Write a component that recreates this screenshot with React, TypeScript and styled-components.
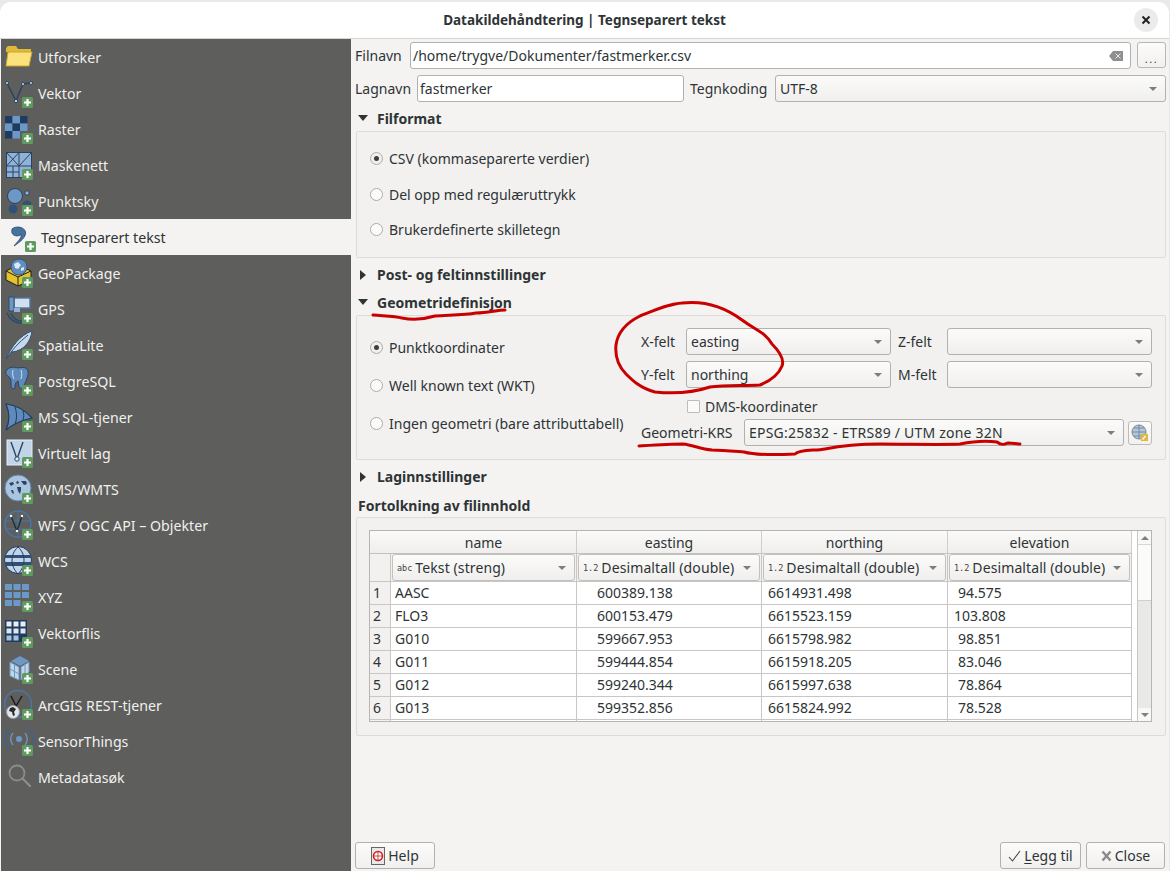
import React from "react";
import styled, { createGlobalStyle } from "styled-components";

const Global = createGlobalStyle`
  html, body { margin: 0; padding: 0; height: 100%; background: #e9e9e9; }
  body { font-family: "Noto Sans", "DejaVu Sans", sans-serif; font-size: 14px; color: #2e3436; overflow: hidden; }
  #root { height: 871px; }
`;

const Page = styled.div`
  position: relative;
  width: 1170px;
  height: 871px;
  padding-top: 2px;
  box-sizing: border-box;
  overflow: hidden;
`;
const Win = styled.div`
  width: 1169px;
  height: 869px;
  background: #f4f3f1;
  border-radius: 11px 11px 0 0;
  display: flex;
  flex-direction: column;
  overflow: hidden;
`;
const TitleBar = styled.div`
  height: 36px;
  flex: none;
  background: #ffffff;
  border-bottom: 1px solid #d6d5d3;
  display: flex;
  align-items: center;
  justify-content: center;
  position: relative;
  font-weight: 700;
  font-size: 13.5px;
  color: #2e3436;
`;
const CloseRound = styled.div`
  position: absolute;
  right: 11px;
  top: 6px;
  width: 24px;
  height: 24px;
  border-radius: 50%;
  background: #ebebeb;
  display: flex;
  align-items: center;
  justify-content: center;
`;
const Body = styled.div`
  flex: 1;
  display: flex;
  min-height: 0;
`;
const Sidebar = styled.div`
  width: 350px;
  margin-left: 1px;
  flex: none;
  background: #5e5e5c;
  font-size: 14.2px;
`;
const SideRow = styled.div<{ $active?: boolean }>`
  height: 36px;
  display: flex;
  align-items: center;
  box-sizing: border-box;
  padding-left: ${(p) => (p.$active ? 5 : 2)}px;
  gap: 3px;
  background: ${(p) => (p.$active ? "#f4f3f1" : "transparent")};
  color: ${(p) => (p.$active ? "#2e3436" : "#f0f0ee")};
`;
const SideIconBox = styled.svg`
  width: 32px;
  height: 32px;
  flex: none;
`;
const Main = styled.div`
  flex: 1;
  min-width: 0;
  padding: 3px 3px 2px 4px;
  display: flex;
  flex-direction: column;
`;
const FormRow = styled.div`
  display: flex;
  align-items: center;
  height: 27px;
  margin-bottom: 6px;
`;
const Label = styled.span<{ $w?: number; $ml?: number }>`
  flex: none;
  white-space: nowrap;
  ${(p) => (p.$w ? `width: ${p.$w}px;` : "")}
  margin-left: ${(p) => p.$ml ?? 0}px;
`;
const Input = styled.div<{ $w: number }>`
  flex: none;
  width: ${(p) => p.$w}px;
  height: 27px;
  box-sizing: border-box;
  background: #fff;
  border: 1px solid #b2b1af;
  border-radius: 3px;
  padding: 0 7px 0 2px;
  display: flex;
  align-items: center;
  justify-content: space-between;
  white-space: nowrap;
`;
const Combo = styled.div<{ $w?: number; $table?: boolean; $wide?: boolean }>`
  flex: ${(p) => (p.$table ? "1" : "none")};
  width: ${(p) => (p.$w ? `${p.$w}px` : "auto")};
  height: 27px;
  box-sizing: border-box;
  background: linear-gradient(#fbfbfa, #f0efed);
  border: 1px solid ${(p) => (p.$table ? "#c2c1bf" : "#b2b1af")};
  border-radius: 3px;
  padding: 0 8px 0 4px;
  display: flex;
  align-items: center;
  justify-content: space-between;
  white-space: nowrap;
  letter-spacing: ${(p) => (p.$wide ? "0.22px" : "0")};
`;
const Caret = styled.span`
  flex: none;
  width: 0;
  height: 0;
  border-left: 4px solid transparent;
  border-right: 4px solid transparent;
  border-top: 4px solid #7d7d7b;
`;
const SmallBtn = styled.div`
  flex: none;
  width: 29px;
  height: 26px;
  margin-left: 6px;
  margin-top: -1px;
  box-sizing: border-box;
  border: 1px solid #b8b7b5;
  border-radius: 3px;
  background: linear-gradient(#fbfbfa, #f2f1ef);
  display: flex;
  align-items: flex-end;
  justify-content: center;
  font-size: 11px;
  line-height: 17px;
  color: #444;
  letter-spacing: 1.5px;
`;
const SectionHead = styled.div<{ $h?: number; $open?: boolean; $top?: number; $left?: number; $pt?: number }>`
  height: ${(p) => p.$h ?? 26}px;
  margin-top: ${(p) => p.$top ?? 0}px;
  padding-top: ${(p) => p.$pt ?? 0}px;
  flex: none;
  box-sizing: border-box;
  display: flex;
  align-items: center;
  font-weight: 700;
  padding-left: ${(p) => p.$left ?? (p.$open ? 0 : 2)}px;
  gap: ${(p) => (p.$open ? 9 : 11)}px;
`;
const TriDown = styled.span`
  width: 0;
  height: 0;
  margin-left: 3px;
  border-left: 5.5px solid transparent;
  border-right: 5.5px solid transparent;
  border-top: 6px solid #2e3436;
`;
const TriRight = styled.span`
  width: 0;
  height: 0;
  margin-left: 3px;
  border-top: 5.5px solid transparent;
  border-bottom: 5.5px solid transparent;
  border-left: 6px solid #2e3436;
`;
const Group = styled.div<{ $mb?: number }>`
  box-sizing: border-box;
  width: 810px;
  margin-left: 1px;
  flex: none;
  border: 1px solid #dddcda;
  border-radius: 2px;
  background: #f2f1ef;
  margin-bottom: ${(p) => p.$mb ?? 0}px;
`;
const RadioList = styled.div`
  height: 125px;
  box-sizing: border-box;
  padding: 9px 13px 0;
`;
const RadioRow = styled.div<{ $h: number }>`
  height: ${(p) => p.$h}px;
  display: flex;
  align-items: center;
  gap: 6px;
  white-space: nowrap;
`;
const Radio = styled.span<{ $on?: boolean }>`
  width: 13px;
  height: 13px;
  flex: none;
  box-sizing: border-box;
  border: 1px solid #ababa9;
  border-radius: 50%;
  background: ${(p) => (p.$on ? "#f0efed" : "#fbfbfa")};
  display: flex;
  align-items: center;
  justify-content: center;
  &::after {
    content: "";
    display: ${(p) => (p.$on ? "block" : "none")};
    width: 5px;
    height: 5px;
    border-radius: 50%;
    background: #3a3f41;
  }
`;
const GeoBody = styled.div`
  height: 143px;
  box-sizing: border-box;
  padding: 12px 13px 0 13px;
  display: flex;
  justify-content: space-between;
`;
const GeoLeft = styled.div`
  flex: none;
`;
const GeoRight = styled.div`
  width: 511px;
  flex: none;
`;
const FieldGrid = styled.div`
  display: grid;
  grid-template-columns: 45px 205px 56px 205px;
  grid-auto-rows: 27px;
  row-gap: 6px;
  align-items: center;
`;
const FieldLabel = styled.span<{ $pad?: number }>`
  padding-left: ${(p) => p.$pad ?? 0}px;
  white-space: nowrap;
`;
const DmsRow = styled.div`
  height: 31px;
  display: flex;
  align-items: center;
  padding-left: 46px;
  gap: 5px;
  padding-top: 6px;
  box-sizing: border-box;
`;
const Check = styled.span`
  width: 13px;
  height: 13px;
  box-sizing: border-box;
  border: 1px solid #bdbcba;
  background: #fafaf9;
  border-radius: 1px;
`;
const KrsRow = styled.div`
  height: 27px;
  display: flex;
  align-items: center;
`;
const IconBtn = styled.div`
  width: 24px;
  height: 24px;
  margin-left: 4px;
  box-sizing: border-box;
  border: 1px solid #bcbbb9;
  border-radius: 3px;
  background: linear-gradient(#fbfbfa, #f2f1ef);
  display: flex;
  align-items: center;
  justify-content: center;
`;
const TableGroupBody = styled.div`
  padding: 12px 13px 13px 12px;
`;
const TableFrame = styled.div`
  height: 192px;
  box-sizing: border-box;
  border: 1px solid #b6b5b3;
  display: flex;
  background: #fff;
  overflow: hidden;
`;
const TableView = styled.div`
  width: 762px;
  flex: none;
  display: grid;
  grid-template-columns: 21px 186px 185px 186px 184px;
  grid-template-rows: 23px 28px repeat(7, 23px);
  align-content: start;
  height: 190px;
  overflow: hidden;
`;
const HeadCell = styled.div<{ $span?: boolean }>`
  ${(p) => (p.$span ? "grid-column: span 2; padding-left: 21px;" : "")}
  box-sizing: border-box;
  background: linear-gradient(#fafaf9, #efeeec);
  border-bottom: 1px solid #c2c1bf;
  border-right: 1px solid #cfcecc;
  display: flex;
  align-items: center;
  justify-content: center;
`;
const CornerCell = styled.div`
  background: #f2f1ef;
  border-right: 1px solid #c8c7c5;
  border-bottom: 1px solid #c8c7c5;
`;
const TypeCell = styled.div`
  background: #f2f1ef;
  border-right: 1px solid #c8c7c5;
  border-bottom: 1px solid #c8c7c5;
  padding: 0 1px;
  display: flex;
  align-items: center;
`;
const TypeTag = styled.span`
  font-family: "DejaVu Sans Mono", monospace;
  font-size: 8.5px;
  margin-right: 3px;
  color: #444;
  letter-spacing: 0;
`;
const TypeText = styled.span`
  display: flex;
  align-items: center;
  letter-spacing: 0.1px;
`;
const RowHead = styled.div`
  background: #f2f1ef;
  border-right: 1px solid #c8c7c5;
  border-bottom: 1px solid #c8c7c5;
  padding-left: 3px;
  line-height: 22px;
`;
const Cell = styled.div<{ $indent: number }>`
  box-sizing: border-box;
  border-right: 1px solid #c8c7c5;
  border-bottom: 1px solid #c8c7c5;
  padding-left: ${(p) => p.$indent}px;
  line-height: 22px;
  white-space: nowrap;
`;
const Scroll = styled.div`
  width: 14px;
  margin-left: 5px;
  flex: none;
  border-left: 1px solid #c8c7c5;
  display: flex;
  flex-direction: column;
`;
const ScrollArrow = styled.div`
  height: 13px;
  flex: none;
  background: #f8f8f7;
  display: flex;
  align-items: center;
  justify-content: center;
`;
const ArrowUp = styled.span`
  width: 0;
  height: 0;
  border-left: 4px solid transparent;
  border-right: 4px solid transparent;
  border-bottom: 4px solid #808080;
`;
const ArrowDown = styled.span`
  width: 0;
  height: 0;
  border-left: 4px solid transparent;
  border-right: 4px solid transparent;
  border-top: 4px solid #808080;
`;
const ScrollThumb = styled.div`
  height: 55px;
  flex: none;
  background: #fbfbfa;
  border-top: 1px solid #d8d7d5;
  border-bottom: 1px solid #d0cfcd;
`;
const ScrollTrough = styled.div`
  flex: 1;
  background: #e9e9e7;
`;
const Footer = styled.div`
  margin-top: auto;
  display: flex;
  align-items: center;
  height: 27px;
  gap: 5px;
`;
const Spacer = styled.div`
  flex: 1;
`;
const FootBtn = styled.div<{ $w: number }>`
  width: ${(p) => p.$w}px;
  height: 27px;
  box-sizing: border-box;
  border: 1px solid #b2b1af;
  border-radius: 3px;
  background: linear-gradient(#fbfbfa, #f1f0ee);
  display: flex;
  align-items: center;
  justify-content: center;
  gap: 3px;
  margin-right: ${(p) => (p.$w === 79 ? 1 : 0)}px;
`;
const Underlined = styled.span`
  text-decoration: underline;
  text-underline-offset: 2px;
`;
const Overlay = styled.svg`
  position: absolute;
  left: 0;
  top: 0;
  width: 1170px;
  height: 871px;
  pointer-events: none;
`;

const Plus = () => (
  <g>
    <rect x="19" y="20" width="11" height="11" rx="1.5" fill="#5f9a5f" />
    <path d="M24.5 22v7M21 25.5h7" stroke="#fff" strokeWidth="2.2" />
  </g>
);

const icons: Record<string, React.ReactNode> = {
  folder: (
    <>
      <path d="M3 7l2-2h8l2 3h13v3H3z" fill="#e0b93a" />
      <path d="M5 11h24l-3 14H3z" fill="#fbe27d" stroke="#c9a52b" />
    </>
  ),
  vector: (
    <>
      <path d="M4 6l9 18 7-17 8-1" fill="none" stroke="#2a4362" strokeWidth="1.5" />
      <circle cx="4" cy="6" r="1.5" fill="#dfe8f2" stroke="#2a4362" />
      <circle cx="13" cy="24" r="1.6" fill="#dfe8f2" stroke="#2a4362" />
      <circle cx="20" cy="7" r="1.5" fill="#dfe8f2" stroke="#2a4362" />
      <circle cx="28" cy="6" r="1.5" fill="#dfe8f2" stroke="#2a4362" />
    </>
  ),
  raster: (
    <>
      <rect x="2" y="3" width="7.5" height="7.5" fill="#1f3b5f" />
      <rect x="9.5" y="3" width="7.5" height="7.5" fill="#6a98c9" />
      <rect x="17" y="3" width="7.5" height="7.5" fill="#1f3b5f" />
      <rect x="2" y="10.5" width="7.5" height="7.5" fill="#6a98c9" />
      <rect x="9.5" y="10.5" width="7.5" height="7.5" fill="#1f3b5f" />
      <rect x="17" y="10.5" width="7.5" height="7.5" fill="#6a98c9" />
      <rect x="2" y="18" width="7.5" height="7.5" fill="#1f3b5f" />
      <rect x="9.5" y="18" width="7.5" height="7.5" fill="#6a98c9" />
    </>
  ),
  mesh: (
    <>
      <rect x="3.500" y="3.500" width="25" height="25" fill="#8fb2d6" stroke="#2a4362" />
      <path d="M3.500 17h25M16 3.500v25M3.500 3.500L16 17M16 3.500L3.500 17M28.500 3.500L16 17M3.500 23h12.500M10 17v11.500" stroke="#2a4362" fill="none" />
    </>
  ),
  cloud: (
    <>
      <circle cx="12" cy="11" r="7.5" fill="#6d97c4" stroke="#2a4362" />
      <circle cx="10" cy="24" r="4.5" fill="#2f5178" />
      <circle cx="24" cy="8" r="2.2" fill="#8fb2d6" stroke="#2a4362" />
      <circle cx="24" cy="20" r="4.5" fill="#2f5178" />
    </>
  ),
  comma: (
    <path d="M6 8C9 5 18 5 19.500 11 20.500 16 14 21 8 25 11 21 15 18 15.500 13.500 12 16 7 15 6 12 5.700 10.500 5.700 9 6 8z" fill="#47729f" stroke="#27466d" strokeWidth="0.8" />
  ),
  geopackage: (
    <>
      <path d="M3 14l12-6 13 6v9l-13 6-12-6z" fill="#e3c42e" stroke="#1e1e1e" />
      <path d="M15 20v9M3 14l12 6 13-6" fill="none" stroke="#1e1e1e" />
      <circle cx="16" cy="10" r="8" fill="#5f8fc0" stroke="#35577d" />
      <path d="M11 7l4-2 3 3-3 4-3-1zM18 11l3-1 0 3-3 1z" fill="#dfe8f2" />
    </>
  ),
  gps: (
    <>
      <path d="M8 20a11 11 0 0 0 11 8M4 20a15 15 0 0 0 15 10" stroke="#2e4a6d" strokeWidth="1.6" fill="none" />
      <rect x="11" y="5" width="16" height="10" fill="#d2e0ee" stroke="#4a76a8" strokeWidth="1.4" />
      <rect x="6" y="4" width="5" height="14" fill="#6d97c4" stroke="#2e4a6d" />
      <path d="M11 15h6v4h-6z" fill="#8fb2d6" />
    </>
  ),
  feather: (
    <>
      <path d="M3 30C8 18 17 6 29 2c-1 10-8 20-20 21z" fill="#c7d8ea" stroke="#2f5178" />
      <path d="M3 30C9 21 16 13 25 6" stroke="#2f5178" fill="none" />
    </>
  ),
  pg: (
    <>
      <path d="M3 6c3-5 9-4 12-3 4-1 9-1 10 3 1 4-2 10-4 14-1 4-4 4-5 2l-1-6c-3 1-3 5-3 7-2 2-4 0-4-3 0-4 0-7-2-8-2-2-4-3-3-6z" fill="#5e8bbb" stroke="#2a4362" />
      <path d="M10 5c-1 4 0 7 1 9M18 5c1 3 1 6 0 9" stroke="#cfe0f0" fill="none" />
    </>
  ),
  mssql: (
    <>
      <path d="M3 3c9 1 18 5 26 14-9 2-18 5-26 12 4-9 4-17 0-26z" fill="#5e8bbb" stroke="#1f3b5f" strokeWidth="1.2" />
      <path d="M12 6c2 6 2 12 0 17M20 10c1 3 1 6 0 9" stroke="#1f3b5f" fill="none" />
    </>
  ),
  virtual: (
    <>
      <rect x="4" y="3" width="25" height="25" fill="#c2d5e8" stroke="#e5edf5" />
      <path d="M8 5l6 17 6-17" fill="none" stroke="#2a4362" strokeWidth="1.4" />
      <circle cx="14" cy="22" r="2.2" fill="#dfe8f2" stroke="#2a4362" />
    </>
  ),
  wms: (
    <>
      <circle cx="15" cy="15" r="13" fill="#a9c4de" stroke="#5f86ad" />
      <path d="M6 10l4-1 1 2-3 2zM13 9l2-1 1 2-2 1zM18 8l5 0 1 3-3 1zM14 14l4 0 0 3-1 4-2-3zM8 17l2 0 1 4-2-1z" fill="#2a4362" />
    </>
  ),
  wfs: (
    <>
      <circle cx="15" cy="15" r="13" fill="none" stroke="#4a76a8" strokeWidth="1.4" />
      <path d="M2 12h26M2 20h26M15 2v26" stroke="#4a76a8" fill="none" />
      <path d="M8 7l6 15 5-15" fill="none" stroke="#1d2b3c" strokeWidth="1.3" />
      <circle cx="8" cy="7" r="1.2" fill="#fff" />
      <circle cx="14" cy="22" r="1.2" fill="#fff" />
      <circle cx="19" cy="7" r="1.2" fill="#fff" />
    </>
  ),
  wcs: (
    <>
      <circle cx="15" cy="15" r="13.5" fill="#c2d5e8" stroke="#1f3b5f" />
      <path d="M2 10h26v3H2zM2 17h26v4H2z" fill="#2f5178" />
      <path d="M15 2c-8 7-8 19 0 27M15 2c8 7 8 19 0 27" fill="none" stroke="#1f3b5f" />
    </>
  ),
  xyz: (
    <path d="M2 3h7v6H2zM10.5 3h7v6h-7zM19 3h7v6h-7zM2 11h7v6H2zM10.5 11h7v6h-7zM19 11h7v6h-7zM2 19h7v6H2zM10.5 19h7v6h-7z" fill="#6a98c9" />
  ),
  tiles: (
    <>
      <rect x="2" y="3" width="22" height="22" fill="#1f3b5f" />
      <path d="M3.500 4.500h5v5h-5zM10.500 4.500h5v5h-5zM17.500 4.500h5v5h-5z" fill="#e9eef4" />
      <path d="M3.500 11.500h5v5h-5zM10.500 11.500h5v5h-5zM17.500 11.500h5v5h-5z" fill="#dde6ef" />
      <path d="M3.500 18.500h5v5h-5zM10.500 18.500h5v5h-5z" fill="#a9c2dc" />
    </>
  ),
  scene: (
    <>
      <path d="M17 3l9 5-9 5-9-5z" fill="#6d97c4" />
      <path d="M7 9l9 5v13l-9-4zM18 14l8-5v10l-8 8z" fill="#c2d5e8" stroke="#6d97c4" />
      <path d="M11.500 11v14M7 16l9 5M22 12v10" stroke="#6d97c4" fill="none" />
    </>
  ),
  arcgis: (
    <>
      <circle cx="15" cy="15" r="13.500" fill="none" stroke="#4a76a8" strokeWidth="1.4" />
      <path d="M8 7l5 10 6-10" fill="none" stroke="#111" strokeWidth="1.200" />
      <circle cx="10" cy="23" r="6.500" fill="#dfe6ee" stroke="#9a9a9a" />
      <path d="M7 19l3-1 3 2-2 3 1 3-2 1-1-4-3-1z" fill="#2a2a2a" />
    </>
  ),
  sensor: (
    <>
      <circle cx="16" cy="14" r="3" fill="#6d97c4" />
      <path d="M10 8a9 9 0 0 0 0 12M22 8a9 9 0 0 1 0 12" stroke="#6d97c4" strokeWidth="1.400" fill="none" />
      <path d="M6 4a14 14 0 0 0 0 20M26 4a14 14 0 0 1 0 20" stroke="#3d6390" strokeWidth="1.500" fill="none" />
    </>
  ),
  search: (
    <>
      <circle cx="14" cy="12" r="7.500" fill="none" stroke="#8c8c8a" strokeWidth="1.800" />
      <path d="M20 18l7 7" stroke="#8c8c8a" strokeWidth="2.400" strokeLinecap="round" />
    </>
  ),
};

const sideItems: { label: string; icon: string; plus: boolean; active?: boolean }[] = [
  { label: "Utforsker", icon: "folder", plus: false },
  { label: "Vektor", icon: "vector", plus: true },
  { label: "Raster", icon: "raster", plus: true },
  { label: "Maskenett", icon: "mesh", plus: true },
  { label: "Punktsky", icon: "cloud", plus: true },
  { label: "Tegnseparert tekst", icon: "comma", plus: true, active: true },
  { label: "GeoPackage", icon: "geopackage", plus: true },
  { label: "GPS", icon: "gps", plus: true },
  { label: "SpatiaLite", icon: "feather", plus: true },
  { label: "PostgreSQL", icon: "pg", plus: true },
  { label: "MS SQL-tjener", icon: "mssql", plus: true },
  { label: "Virtuelt lag", icon: "virtual", plus: true },
  { label: "WMS/WMTS", icon: "wms", plus: true },
  { label: "WFS / OGC API – Objekter", icon: "wfs", plus: true },
  { label: "WCS", icon: "wcs", plus: true },
  { label: "XYZ", icon: "xyz", plus: true },
  { label: "Vektorflis", icon: "tiles", plus: true },
  { label: "Scene", icon: "scene", plus: true },
  { label: "ArcGIS REST-tjener", icon: "arcgis", plus: true },
  { label: "SensorThings", icon: "sensor", plus: true },
  { label: "Metadatasøk", icon: "search", plus: false },
];

const rows: [string, string, string, string, number][] = [
  ["AASC", "600389.138", "6614931.498", "94.575", 10],
  ["FLO3", "600153.479", "6615523.159", "103.808", 6],
  ["G010", "599667.953", "6615798.982", "98.851", 10],
  ["G011", "599444.854", "6615918.205", "83.046", 10],
  ["G012", "599240.344", "6615997.638", "78.864", 10],
  ["G013", "599352.856", "6615824.992", "78.528", 10],
  ["", "", "", "", 10],
];

const Radios = ({ items, h }: { items: [string, boolean][]; h: number }) => (
  <>
    {items.map(([t, on]) => (
      <RadioRow key={t} $h={h}>
        <Radio $on={on} />
        {t}
      </RadioRow>
    ))}
  </>
);

export default function App() {
  return (
    <Page>
      <Global />
      <Win>
        <TitleBar>
          Datakildehåndtering | Tegnseparert tekst
          <CloseRound>
            <svg width="10" height="10" viewBox="0 0 10 10">
              <path d="M1.500 1.500l7 7M8.500 1.500l-7 7" stroke="#222" strokeWidth="2" />
            </svg>
          </CloseRound>
        </TitleBar>
        <Body>
          <Sidebar>
            {sideItems.map((it) => (
              <SideRow key={it.label} $active={it.active}>
                <SideIconBox viewBox="0 0 32 32">
                  {icons[it.icon]}
                  {it.plus && <Plus />}
                </SideIconBox>
                {it.label}
              </SideRow>
            ))}
          </Sidebar>
          <Main>
            <FormRow>
              <Label $w={55}>Filnavn</Label>
              <Input $w={721}>
                /home/trygve/Dokumenter/fastmerker.csv
                <svg width="14" height="10" viewBox="0 0 14 10">
                  <path d="M4 0h10v10H4L0 5z" fill="#8f8f8f" />
                  <path d="M6.500 2.500l5 5M11.500 2.500l-5 5" stroke="#e8e8e8" strokeWidth="1" />
                </svg>
              </Input>
              <SmallBtn>...</SmallBtn>
            </FormRow>
            <FormRow>
              <Label $w={62}>Lagnavn</Label>
              <Input $w={267}>fastmerker</Input>
              <Label $w={85} $ml={6}>Tegnkoding</Label>
              <Combo $w={391}>
                UTF-8
                <Caret />
              </Combo>
            </FormRow>
            <SectionHead $open $top={-3}>
              <TriDown />
              Filformat
            </SectionHead>
            <Group $mb={3}>
              <RadioList>
                <Radios h={35.5} items={[["CSV (kommaseparerte verdier)", true], ["Del opp med regulæruttrykk", false], ["Brukerdefinerte skilletegn", false]]} />
              </RadioList>
            </Group>
            <SectionHead $h={27}>
              <TriRight />
              Post- og feltinnstillinger
            </SectionHead>
            <SectionHead $open $h={27} $pt={1}>
              <TriDown />
              Geometridefinisjon
            </SectionHead>
            <Group $mb={3}>
              <GeoBody>
                <GeoLeft>
                  <Radios h={38} items={[["Punktkoordinater", true], ["Well known text (WKT)", false], ["Ingen geometri (bare attributtabell)", false]]} />
                </GeoLeft>
                <GeoRight>
                  <FieldGrid>
                    <FieldLabel>X-felt</FieldLabel>
                    <Combo>easting<Caret /></Combo>
                    <FieldLabel $pad={7}>Z-felt</FieldLabel>
                    <Combo><span /><Caret /></Combo>
                    <FieldLabel>Y-felt</FieldLabel>
                    <Combo>northing<Caret /></Combo>
                    <FieldLabel $pad={7}>M-felt</FieldLabel>
                    <Combo><span /><Caret /></Combo>
                  </FieldGrid>
                  <DmsRow>
                    <Check />
                    DMS-koordinater
                  </DmsRow>
                  <KrsRow>
                    <Label $w={103}>Geometri-KRS</Label>
                    <Combo $w={380} $wide>
                      EPSG:25832 - ETRS89 / UTM zone 32N
                      <Caret />
                    </Combo>
                    <IconBtn>
                      <svg width="18" height="18" viewBox="0 0 18 18">
                        <circle cx="8" cy="8" r="7" fill="#b4c7da" stroke="#7c8a99" />
                        <path d="M1 8h14M8 1v14M3 4h10M3 12h10" stroke="#6b7f94" strokeWidth="0.8" fill="none" />
                        <rect x="10" y="10" width="7" height="7" fill="#e0b93a" />
                        <path d="M11.500 15.500l3-3.500" stroke="#fff" strokeWidth="1.300" />
                      </svg>
                    </IconBtn>
                  </KrsRow>
                </GeoRight>
              </GeoBody>
            </Group>
            <SectionHead $h={27}>
              <TriRight />
              Laginnstillinger
            </SectionHead>
            <SectionHead $h={27} $left={3} $pt={3}>Fortolkning av filinnhold</SectionHead>
            <Group>
              <TableGroupBody>
                <TableFrame>
                  <TableView>
                    <HeadCell $span>name</HeadCell>
                    <HeadCell>easting</HeadCell>
                    <HeadCell>northing</HeadCell>
                    <HeadCell>elevation</HeadCell>
                    <CornerCell />
                    {[["abc", "Tekst (streng)"], ["1.2", "Desimaltall (double)"], ["1.2", "Desimaltall (double)"], ["1.2", "Desimaltall (double)"]].map(([tag, txt], i) => (
                      <TypeCell key={i}>
                        <Combo $table>
                          <TypeText><TypeTag>{tag}</TypeTag>{txt}</TypeText>
                          <Caret />
                        </Combo>
                      </TypeCell>
                    ))}
                    {rows.map((r, i) => (
                      <React.Fragment key={i}>
                        <RowHead>{r[0] ? i + 1 : ""}</RowHead>
                        <Cell $indent={4}>{r[0]}</Cell>
                        <Cell $indent={20}>{r[1]}</Cell>
                        <Cell $indent={6}>{r[2]}</Cell>
                        <Cell $indent={r[4]}>{r[3]}</Cell>
                      </React.Fragment>
                    ))}
                  </TableView>
                  <Scroll>
                    <ScrollArrow><ArrowUp /></ScrollArrow>
                    <ScrollThumb />
                    <ScrollTrough />
                    <ScrollArrow><ArrowDown /></ScrollArrow>
                  </Scroll>
                </TableFrame>
              </TableGroupBody>
            </Group>
            <Footer>
              <FootBtn $w={80}>
                <svg width="14" height="18" viewBox="0 0 14 18">
                  <rect x="0.500" y="0.500" width="13" height="17" fill="#e8e8e8" stroke="#666" />
                  <circle cx="7" cy="9" r="4.500" fill="#fff" stroke="#c22" strokeWidth="1.600" />
                  <path d="M7 4.500v9M2.500 9h9" stroke="#c22" strokeWidth="0.800" />
                </svg>
                Help
              </FootBtn>
              <Spacer />
              <FootBtn $w={81}>
                <svg width="13" height="12" viewBox="0 0 13 12">
                  <path d="M1 7l3.500 4L12 1" stroke="#444" strokeWidth="1.100" fill="none" />
                </svg>
                <span><Underlined>L</Underlined>egg til</span>
              </FootBtn>
              <FootBtn $w={79}>
                <svg width="11" height="12" viewBox="0 0 11 12">
                  <path d="M1.500 1.500l8 9M9.500 1.500l-8 9" stroke="#8a8a88" strokeWidth="2.400" />
                </svg>
                Close
              </FootBtn>
            </Footer>
          </Main>
        </Body>
      </Win>
      <Overlay viewBox="0 0 1170 871">
        <g fill="none" stroke="#c90000" strokeWidth="3" strokeLinecap="round" strokeLinejoin="round">
          <path d="M373 315C385 316 395 316 402 318 412 320 425 319 435 316 450 315 465 315 476 313 488 313 497 310 505 310" />
          <path d="M682 303C700 301 722 305 742 320 757 331 766 333 772 344 778 350 785 358 782 366 778 376 770 381 760 385 745 386 725 385 710 387 695 392 675 394 655 392 640 388 632 380 626 374 618 366 615 355 616 345 618 330 628 322 640 316 655 310 668 304 682 303Z" />
          <path d="M639 446C655 445 670 444 683 444 693 445 700 449 712 450 722 450 732 451 744 452 755 455 775 455 795 454 800 449 815 451 825 449 840 446 855 444 880 444 910 444 940 445 960 444 975 441 990 441 997 442 1002 446 1005 444 1008 443L1020 444" />
        </g>
      </Overlay>
    </Page>
  );
}
